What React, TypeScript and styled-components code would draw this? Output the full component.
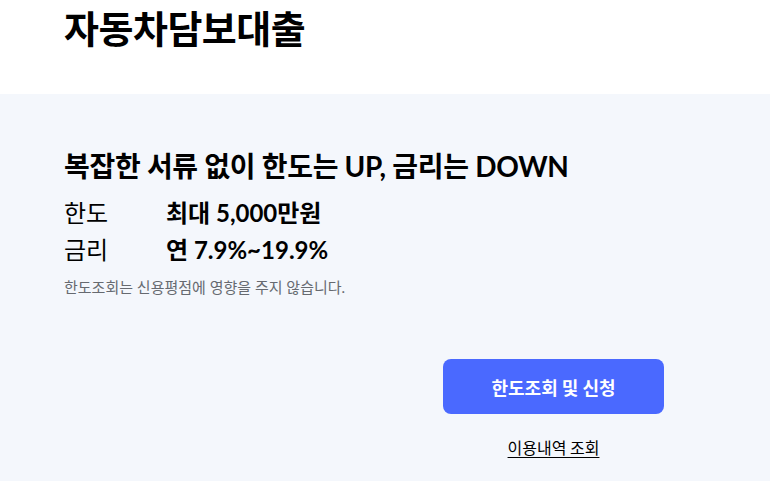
import styled, { createGlobalStyle } from "styled-components";

const GlobalStyle = createGlobalStyle`
	html, body {
		margin: 0;
		padding: 0;
		background: #ffffff;
	}
	body {
		font-family: Lato, "Noto Sans CJK KR", "Noto Sans", sans-serif;
		color: #000000;
	}
`;

const Header = styled.header`
	height: 94px;
	padding: 0 64px;
	box-sizing: border-box;
`;

const Title = styled.h1`
	margin: 0;
	font-family: "Noto Sans CJK KR", sans-serif;
	font-size: 38px;
	font-weight: 700;
	line-height: 54px;
	letter-spacing: -0.5px;
`;

const Section = styled.section`
	background: #f4f7fc;
	padding: 54px 64px 0;
	min-height: 387px;
	box-sizing: border-box;
`;

const Content = styled.div`
	width: 600px;
	display: flex;
	flex-direction: column;
`;

const Headline = styled.h2`
	margin: 0;
	font-size: 28px;
	font-weight: 700;
	line-height: 36px;
	letter-spacing: -0.3px;
`;

const InfoList = styled.dl`
	margin: 10px 0 0;
	display: grid;
	grid-template-columns: 102px 1fr;
`;

const Term = styled.dt`
	margin: 0;
	font-size: 24px;
	font-weight: 400;
	line-height: 37px;
`;

const Value = styled.dd`
	margin: 0;
	font-size: 24px;
	font-weight: 700;
	line-height: 37px;
`;

const Note = styled.p`
	margin: 8px 0 0;
	font-size: 15px;
	line-height: 22px;
	color: #666a70;
`;

const Actions = styled.div`
	margin-top: 61px;
	align-self: flex-end;
	width: 221px;
	display: flex;
	flex-direction: column;
	align-items: center;
`;

const PrimaryButton = styled.button`
	width: 100%;
	height: 55px;
	border: none;
	border-radius: 8px;
	background: #4a69ff;
	color: #ffffff;
	font-family: "Noto Sans CJK KR", sans-serif;
	font-size: 18px;
	font-weight: 700;
	cursor: pointer;
`;

const HistoryLink = styled.a`
	margin-top: 22px;
	font-family: "Noto Sans CJK KR", sans-serif;
	font-size: 16px;
	line-height: 22px;
	color: #000000;
	text-decoration: underline;
	text-underline-offset: 3px;
	cursor: pointer;
`;

function App() {
	return (
		<>
			<GlobalStyle />
			<Header>
				<Title>자동차담보대출</Title>
			</Header>
			<Section>
				<Content>
					<Headline>복잡한 서류 없이 한도는 UP, 금리는 DOWN</Headline>
					<InfoList>
						<Term>한도</Term>
						<Value>최대 5,000만원</Value>
						<Term>금리</Term>
						<Value>연 7.9%~19.9%</Value>
					</InfoList>
					<Note>한도조회는 신용평점에 영향을 주지 않습니다.</Note>
					<Actions>
						<PrimaryButton>한도조회 및 신청</PrimaryButton>
						<HistoryLink>이용내역 조회</HistoryLink>
					</Actions>
				</Content>
			</Section>
		</>
	);
}

export default App;
